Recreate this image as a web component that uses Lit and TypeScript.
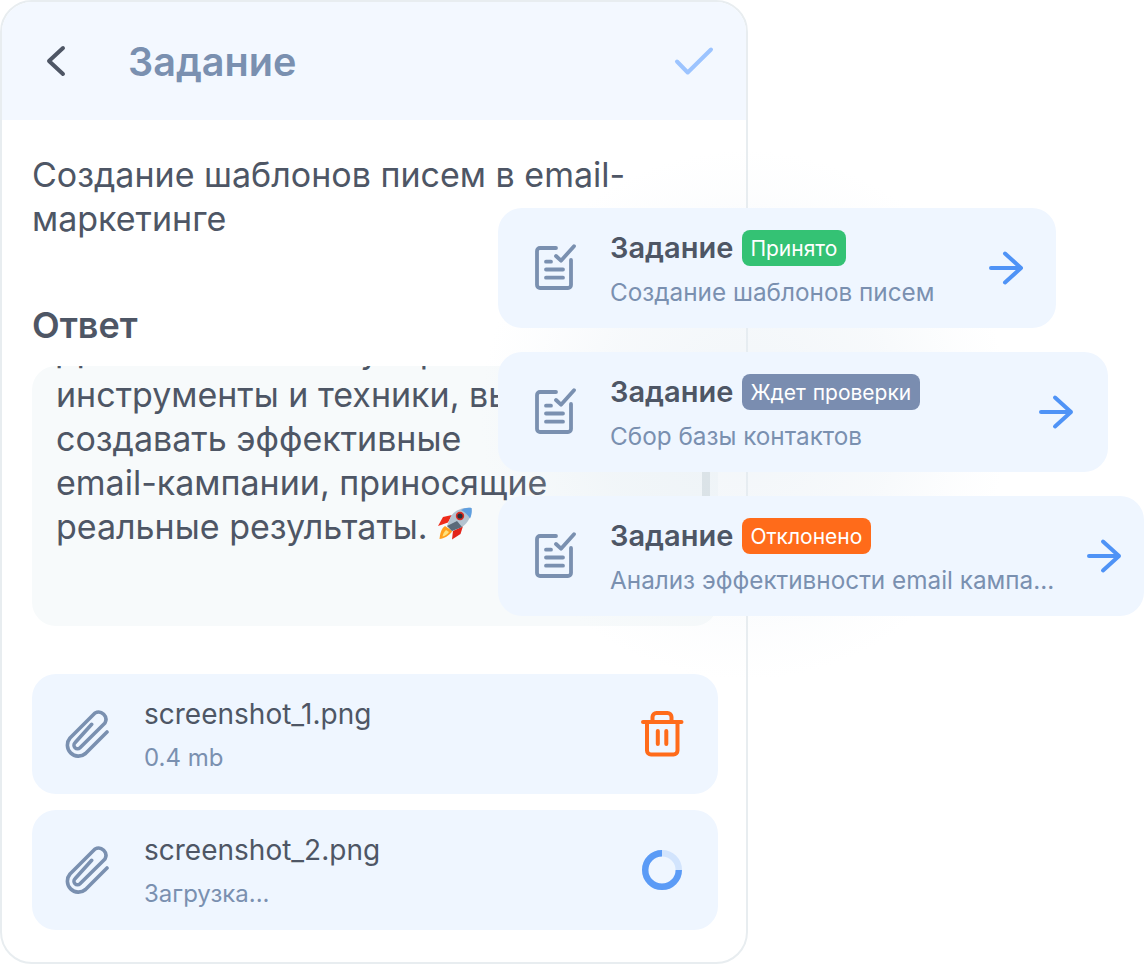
import { LitElement, html, css, svg } from "lit";
import { customElement } from "lit/decorators.js";

const taskIcon = html`<svg class="task-ic" width="42" height="48" viewBox="534 244 42 48" fill="none" stroke="#7a90b0" stroke-width="3.8" stroke-linecap="round" stroke-linejoin="round">
  <path d="M556 248H540a3 3 0 0 0-3 3v34a3 3 0 0 0 3 3h28a3 3 0 0 0 3-3V260" />
  <path d="M556 256l5 4.700 13-14.500" />
  <path d="M546 261.700h5M546 269.500h17M546 277.700h17" />
</svg>`;

const arrow = html`<svg class="arrow" width="36" height="36" viewBox="988 250 36 36" fill="none" stroke="#4f93f6" stroke-width="4" stroke-linecap="round" stroke-linejoin="round">
  <path d="M991 268h30M1005 253.500L1021 268L1005 282.500" />
</svg>`;

const clip = html`<svg class="clip" width="48" height="50" viewBox="64 708 48 50" fill="none" stroke="#7a90b0" stroke-width="3.6" stroke-linecap="round" stroke-linejoin="round">
  <path d="M107 731L85.500 752.500A11 11 0 0 1 70 737L95 712A7.400 7.400 0 0 1 105 722L80 746.700A3.500 3.500 0 0 1 75 741.700L91.700 723.300" />
</svg>`;

const rocket = svg`<svg class="rocket" width="36" height="33" viewBox="0 0 36 33">
  <path d="M8 19C4 22 3 27 2.500 32C7 31.500 12 29 15.500 24z" fill="#ff9f1c"/>
  <path d="M9 23C7 25 6 27 5.500 29.500C8 29 10 27.500 12 25z" fill="#ffe27a"/>
  <path d="M15 8L6 10L1 19L11 15.500z" fill="#ee2b1a"/>
  <path d="M26 19L23.500 27L15 32.500L16 24z" fill="#e3241a"/>
  <path d="M34.500 1C26 0 18 3 14 9L10 19L15 24L25 20C31 16 35.500 8 34.500 1z" fill="#b4c3d0"/>
  <path d="M10 19L15 24L25 20L20 14z" fill="#5a6a79"/>
  <path d="M34.500 1C31 .5 27 1 24 3C28 5 31 8 33 11.500C34.800 8 35 4 34.500 1z" fill="#5f9fe0"/>
  <circle cx="23" cy="9" r="4.200" fill="#d92a20"/>
  <circle cx="23" cy="9" r="2.600" fill="#26303b"/>
</svg>`;

@customElement("app-root")
export class AppRoot extends LitElement {
  static styles = css`
    :host { display: block; width: 1144px; height: 964px; position: relative; overflow: hidden; background: #fff; font-family: Inter, "Noto Sans", sans-serif; color: #4e5665; }
    * { box-sizing: border-box; }
    .card { width: 748px; height: 964px; border: 2px solid #e8edf0; border-radius: 32px; overflow: hidden; background: #fff; }
    .head { height: 118px; background: #f3f8ff; display: flex; align-items: center; padding-left: 42px; padding-right: 30px; }
    .head h1 { margin: 2px 0 0 60px; font-size: 39.600px; font-weight: 600; color: #7a90b0; flex: 1; line-height: 44px; }
    .body { padding: 33px 28px 0 30px; }
    .desc { margin: 0; font-size: 34px; line-height: 44px; }
    .ans { margin: 62px 0 19px; font-size: 36px; line-height: 44px; font-weight: 600; }
    .area { position: relative; height: 260px; border-radius: 24px; background: #f7fafb; overflow: hidden; padding: 0 24px; font-size: 34px; line-height: 44px; }
    .scrolled { margin-top: -37px; width: 640px; }
    .nb { white-space: nowrap; }
    .thumb { position: absolute; left: 670px; top: 40px; width: 8px; height: 100px; background: #d5dde0; }
    .rocket { vertical-align: -1px; }
    .files { margin-top: 48px; display: flex; flex-direction: column; gap: 16px; }
    .file { height: 120px; border-radius: 24px; background: #eff6ff; display: flex; align-items: center; padding: 0 34px 0 32px; }
    .file .clip { flex: none; margin-right: 32px; }
    .file .t { flex: 1; padding-top: 2px; }
    .name { font-size: 28px; line-height: 36px; }
    .sub { font-size: 24px; line-height: 32px; color: #7a90b0; margin-top: 10px; }
    .glow { position: absolute; left: 480px; top: 150px; width: 530px; height: 530px; border-radius: 50%; background: radial-gradient(circle closest-side, rgba(228,236,243,.5) 0%, rgba(228,236,243,.3) 55%, rgba(228,236,243,.08) 85%, rgba(228,236,243,0) 100%); }
    .floats { position: absolute; left: 498px; top: 208px; display: flex; flex-direction: column; gap: 24px; align-items: flex-start; }
    .task { height: 120px; border-radius: 24px; background: #eff6ff; display: flex; align-items: center; padding: 0 32px 0 36px; }
    .w1 { width: 558px; } .w2 { width: 610px; padding-right: 34px; } .w3 { width: 646px; padding-right: 22px; }
    .task .task-ic { flex: none; margin-right: 34px; }
    .task .arrow { flex: none; margin-left: auto; }
    .tt { display: flex; flex-direction: column; min-width: 0; margin-top: 2px; }
    .row { display: flex; align-items: center; gap: 9px; height: 36px; }
    .row b { font-size: 29px; font-weight: 600; margin-bottom: 2px; }
    .badge { height: 36px; border-radius: 8px; padding: 0 9px 0 8px; display: flex; align-items: center; font-size: 21px; word-spacing: 1px; color: #fff; }
    .ok { background: #34c274; } .wait { background: #7a8db0; } .no { background: #ff6b1a; }
    .tsub { font-size: 24.300px; line-height: 32px; color: #7a90b0; margin-top: 10px; white-space: nowrap; }
  `;

  render() {
    const tasks = [
      { w: "w1", cls: "ok", st: "Принято", sub: "Создание шаблонов писем" },
      { w: "w2", cls: "wait", st: "Ждет проверки", sub: "Сбор базы контактов" },
      { w: "w3", cls: "no", st: "Отклонено", sub: "Анализ эффективности email кампа..." },
    ];
    return html`
      <div class="card">
        <div class="head">
          <svg width="24" height="34" viewBox="44 43 24 34" fill="none" stroke="#4e5665" stroke-width="4" stroke-linecap="round" stroke-linejoin="round"><path d="M63 47L49 60L63 73" /></svg>
          <h1>Задание</h1>
          <svg width="42" height="32" viewBox="674 43 42 32" fill="none" stroke="#9cc4ff" stroke-width="4" stroke-linecap="round" stroke-linejoin="round"><path d="M677 59.500L687.700 70.500L711 47.500" /></svg>
        </div>
        <div class="body">
          <p class="desc">Создание шаблонов писем в email-маркетинге</p>
          <h2 class="ans">Ответ</h2>
          <div class="area">
            <div class="scrolled">Для этого ставим упор на эти инструменты и техники, вы можете создавать эффективные <span class="nb">email-кампании,</span> приносящие реальные результаты. ${rocket}</div>
            <div class="thumb"></div>
          </div>
          <div class="files">
            <div class="file">${clip}<div class="t"><div class="name">screenshot_1.png</div><div class="sub">0.4 mb</div></div>
              <svg width="44" height="48" viewBox="640 710 44 48" fill="none" stroke="#ff6b1a" stroke-width="4" stroke-linecap="round" stroke-linejoin="round"><path d="M643 722h38.500M652.500 722v-5a4 4 0 0 1 4-4h11a4 4 0 0 1 4 4v5M647 722v28.500a4 4 0 0 0 4 4h22.500a4 4 0 0 0 4-4V722M657.800 731v13M666.300 731v13" /></svg>
            </div>
            <div class="file">${clip}<div class="t"><div class="name">screenshot_2.png</div><div class="sub">Загрузка...</div></div>
              <svg width="44" height="44" viewBox="0 0 44 44" fill="none" stroke-width="6.400"><circle cx="22" cy="22" r="16.800" stroke="#d2e4fd"/><path d="M38.800 22A16.800 16.800 0 1 1 22 5.200" stroke="#5b9bf6"/></svg>
            </div>
          </div>
        </div>
      </div>
      <div class="glow"></div>
      <div class="floats">
        ${tasks.map(t => html`<div class="task ${t.w}">${taskIcon}<div class="tt"><div class="row"><b>Задание</b><span class="badge ${t.cls}">${t.st}</span></div><div class="tsub">${t.sub}</div></div>${arrow}</div>`)}
      </div>
    `;
  }
}
